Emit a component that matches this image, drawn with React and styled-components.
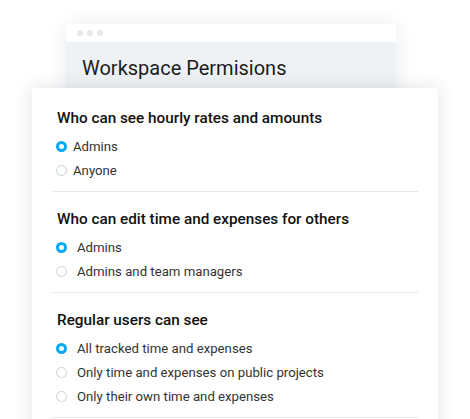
import styled, { createGlobalStyle } from "styled-components";

const GlobalStyle = createGlobalStyle`
  body {
    margin: 0;
    background: #ffffff;
    font-family: Roboto, "Liberation Sans", sans-serif;
  }
`;

const sections = [
  {
    title: "Who can see hourly rates and amounts",
    wide: false,
    options: ["Admins", "Anyone"],
  },
  {
    title: "Who can edit time and expenses for others",
    wide: true,
    options: ["Admins", "Admins and team managers"],
  },
  {
    title: "Regular users can see",
    wide: true,
    options: [
      "All tracked time and expenses",
      "Only time and expenses on public projects",
      "Only their own time and expenses",
    ],
  },
];

const App = () => {
  return (
    <Page>
      <GlobalStyle />
      <BackWindow>
        <WindowBar>
          <Dot />
          <Dot />
          <Dot />
        </WindowBar>
        <WindowHead>
          <WindowTitle>Workspace Permisions</WindowTitle>
        </WindowHead>
      </BackWindow>
      <Card>
        {sections.map((s) => (
          <Section key={s.title}>
            <Heading>{s.title}</Heading>
            <Options>
              {s.options.map((o, i) => (
                <Option key={o} $wide={s.wide}>
                  <Radio $checked={i === 0} />
                  <span>{o}</span>
                </Option>
              ))}
            </Options>
          </Section>
        ))}
      </Card>
    </Page>
  );
};

export default App;

const Page = styled.div`
  width: 470px;
  height: 419px;
  overflow: hidden;
  padding-top: 24px;
  box-sizing: border-box;
`;

const BackWindow = styled.div`
  margin-left: 66px;
  width: 330px;
  height: 90px;
  background: #eef2f5;
  box-shadow: 0 0 18px rgba(40, 60, 80, 0.1);
`;

const WindowBar = styled.div`
  height: 18px;
  background: #ffffff;
  display: flex;
  align-items: center;
  gap: 4px;
  padding-left: 11px;
`;

const Dot = styled.span`
  width: 6px;
  height: 6px;
  border-radius: 50%;
  background: #e4eaee;
`;

const WindowHead = styled.div`
  padding: 14px 0 0 16px;
`;

const WindowTitle = styled.div`
  font-size: 20px;
  color: #1d1d1d;
  line-height: 24px;
`;

const Card = styled.div`
  position: relative;
  z-index: 1;
  margin: -26px 0 0 32px;
  width: 406px;
  min-height: 360px;
  background: #ffffff;
  border-radius: 3px;
  box-shadow: 0 0 18px rgba(40, 60, 80, 0.14);
  padding: 0 20px;
  box-sizing: border-box;
`;

const Section = styled.div`
  padding: 18px 0 9px;
  border-bottom: 1px solid #e4eaee;

  &:first-child {
    padding-top: 21px;
  }
`;

const Heading = styled.div`
  padding-left: 5px;
  font-size: 15.3px;
  font-weight: 500;
  color: #111111;
  line-height: 18px;
`;

const Options = styled.div`
  display: flex;
  flex-direction: column;
  padding-top: 7px;
`;

const Option = styled.div`
  display: flex;
  align-items: center;
  gap: ${(p) => (p.$wide ? "10px" : "6px")};
  height: 24px;
  padding-left: 4px;
  font-size: 13.2px;
  color: #333333;
`;

const Radio = styled.span`
  width: 11px;
  height: 11px;
  border-radius: 50%;
  box-sizing: border-box;
  border: ${(p) => (p.$checked ? "3px solid #03a9f4" : "1px solid #c6d2d9")};
  background: #ffffff;
  flex-shrink: 0;
`;
